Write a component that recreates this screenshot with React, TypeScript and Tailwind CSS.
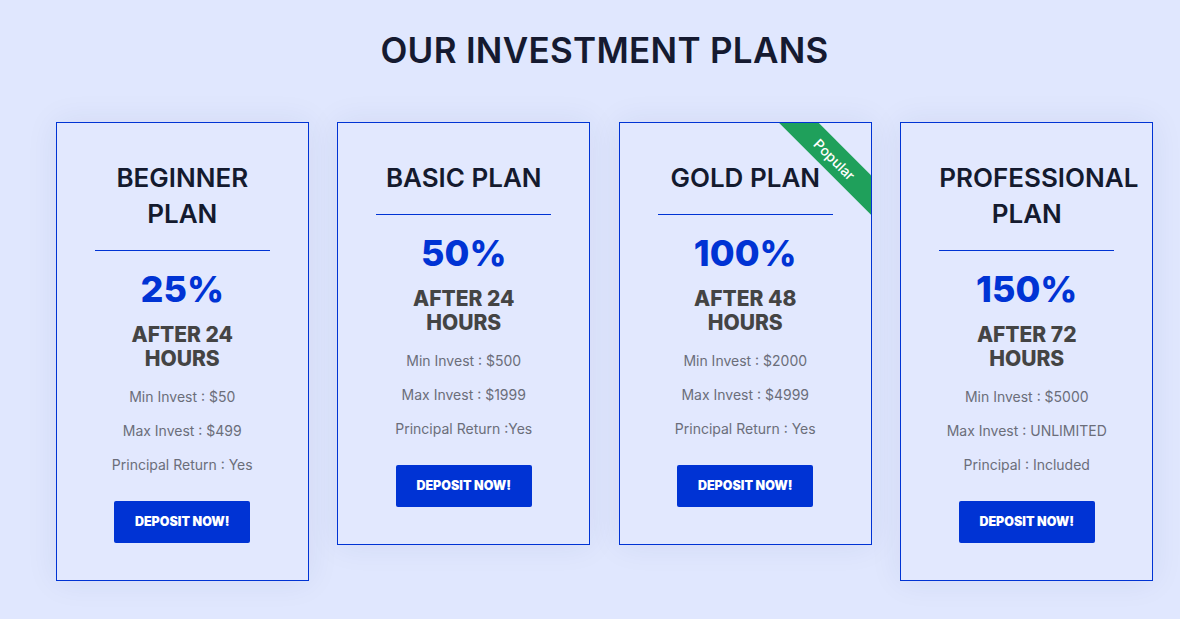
import React from 'react';

interface Plan {
  name: string;
  rate: string;
  after: string;
  lines: string[];
  popular?: boolean;
  twoLine?: boolean;
}

const plans: Plan[] = [
  { name: 'BEGINNER PLAN', rate: '25%', after: 'AFTER 24 HOURS', lines: ['Min Invest : $50', 'Max Invest : $499', 'Principal Return : Yes'], twoLine: true },
  { name: 'BASIC PLAN', rate: '50%', after: 'AFTER 24 HOURS', lines: ['Min Invest : $500', 'Max Invest : $1999', 'Principal Return :Yes'] },
  { name: 'GOLD PLAN', rate: '100%', after: 'AFTER 48 HOURS', lines: ['Min Invest : $2000', 'Max Invest : $4999', 'Principal Return : Yes'], popular: true },
  { name: 'PROFESSIONAL PLAN', rate: '150%', after: 'AFTER 72 HOURS', lines: ['Min Invest : $5000', 'Max Invest : UNLIMITED', 'Principal : Included'], twoLine: true },
];

function PlanCard({ plan }: { plan: Plan }) {
  const [first, second] = plan.name.split(' ');
  return (
    <div className="relative overflow-hidden w-[253px] border border-[#0033d4] bg-[#e2e8fe] px-[38px] pt-[37px] pb-[37px] shadow-[0_0_30px_rgba(40,50,120,0.08)] flex flex-col items-center">
      {plan.popular && (
        <div className="absolute top-[22px] right-[-39px] w-[150px] h-[28px] rotate-45 bg-[#1fa05b] flex items-center justify-center text-white text-[14px] font-medium">
          Popular
        </div>
      )}

      {/* title */}
      <h3 className="w-full text-center text-[26px] leading-[36px] font-semibold text-[#141a2e]">
        {plan.twoLine ? (
          <>
            <span className="whitespace-nowrap">{first}</span>
            <br />
            {second}
          </>
        ) : (
          plan.name
        )}
      </h3>

      <div className="w-full h-px bg-[#0033d4] mt-[18px]" />

      <div className="mt-[18px] text-[36px] leading-[40px] font-extrabold text-[#0033d4]">{plan.rate}</div>

      <div className="mt-[14px] w-[140px] text-center text-[21px] leading-[24px] font-extrabold text-[#444444]">
        {plan.after}
      </div>

      <div className="mt-[16px] flex flex-col items-center text-[14px] leading-[20px] text-[#6b6e7a] gap-[14px]">
        {plan.lines.map((l) => (
          <p key={l}>{l}</p>
        ))}
      </div>

      <button className="mt-[26px] w-[136px] h-[42px] rounded-[2px] bg-[#0033d4] text-white text-[12.5px] font-black">
        DEPOSIT NOW!
      </button>
    </div>
  );
}

export default function App() {
  return (
    <div className="min-h-screen w-full bg-[#e0e7fe] font-['Inter',sans-serif] pt-[28px] pl-[29px]">
      <h2 className="text-center text-[35px] leading-[44px] font-semibold text-[#151a30] tracking-[0.3px]">
        OUR INVESTMENT PLANS
      </h2>
      <div className="mt-[50px] flex items-start justify-center gap-[28.5px]">
        {plans.map((p) => (
          <PlanCard key={p.name} plan={p} />
        ))}
      </div>
    </div>
  );
}
